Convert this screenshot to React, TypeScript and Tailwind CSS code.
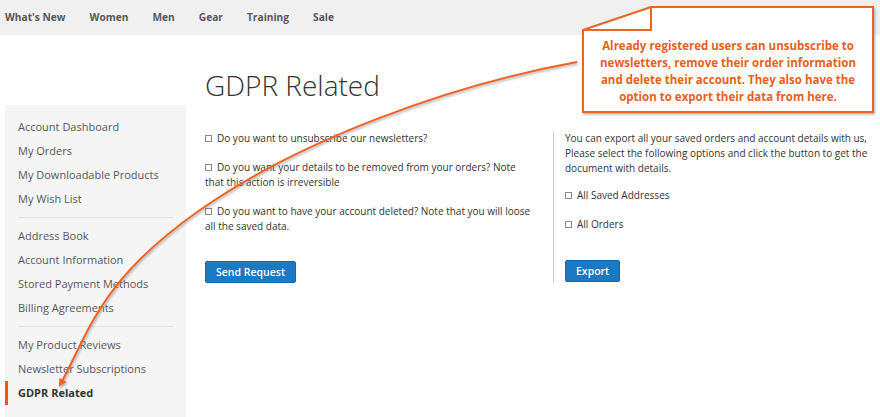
import React from "react";

const navItems = ["What's New", "Women", "Men", "Gear", "Training", "Sale"];

const groups = [
  ["Account Dashboard", "My Orders", "My Downloadable Products", "My Wish List"],
  ["Address Book", "Account Information", "Stored Payment Methods", "Billing Agreements"],
  ["My Product Reviews", "Newsletter Subscriptions", "GDPR Related"],
];

function Box() {
  return <span className="inline-block w-[7px] h-[7px] border border-[#8a8a8a] mr-[5px] align-[0px] bg-white" />;
}

export default function App() {
  return (
    <div
      className="relative w-[880px] h-[417px] overflow-hidden bg-white text-[#333]"
      style={{ fontFamily: '"Open Sans", "Noto Sans", sans-serif' }}
    >
      {/* top nav */}
      <div className="h-[35px] bg-[#f0f0f0] flex items-center pl-[5px] gap-[24px] text-[10.2px] font-bold text-[#575757]">
        {navItems.map((n) => (
          <span key={n}>{n}</span>
        ))}
      </div>

      <div className="flex">
        {/* sidebar */}
        <div className="ml-[5px] w-[181px] mt-[70px] bg-[#f5f5f5] pt-[10px] pb-[20px] h-[330px]">
          {groups.map((g, gi) => (
            <div key={gi}>
              {gi > 0 && <div className="mx-[13px] my-[6px] h-px bg-[#e3e3e3]" />}
              {g.map((item) => {
                const active = item === "GDPR Related";
                return active ? (
                  <div
                    key={item}
                    className="h-[24px] flex items-center border-l-[3px] border-[#ff5501] pl-[10px] text-[11px] font-bold text-[#333]"
                  >
                    {item}
                  </div>
                ) : (
                  <div key={item} className="h-[24px] flex items-center pl-[13px] text-[11px] text-[#575757]">
                    {item}
                  </div>
                );
              })}
            </div>
          ))}
        </div>

        {/* main */}
        <div className="ml-[19px] flex-1">
          <h1 className="mt-[33px] h-[35px] text-[28px] leading-[35px] font-light text-[#333]">GDPR Related</h1>
          <div className="mt-[28px] flex text-[10px] leading-[15px] text-[#333]">
            <div className="w-[348px] pr-[18px]">
              <div className="mb-[14px]">
                <Box />
                Do you want to unsubscribe our newsletters?
              </div>
              <div className="mb-[14px]">
                <Box />
                Do you want your details to be removed from your orders? Note that this action is irreversible
              </div>
              <div>
                <Box />
                Do you want to have your account deleted? Note that you will loose all the saved data.
              </div>
              <button className="mt-[27px] h-[22px] px-[10px] bg-[#1979c3] border border-[#1369ad] rounded-[2px] text-white font-semibold text-[10.5px]">
                Send Request
              </button>
            </div>
            <div className="border-l border-[#cfcfcf] pl-[11px] w-[322px]">
              <div>
                You can export all your saved orders and account details with us, Please select the following options and click the button to get the document with details.
              </div>
              <div className="mt-[12px]">
                <Box />
                All Saved Addresses
              </div>
              <div className="mt-[14px]">
                <Box />
                All Orders
              </div>
              <button className="mt-[28px] h-[22px] px-[10px] bg-[#1979c3] border border-[#1369ad] rounded-[2px] text-white font-semibold text-[10.5px]">
                Export
              </button>
            </div>
          </div>
        </div>
      </div>

      {/* annotation overlay */}
      <svg className="absolute inset-0 pointer-events-none" width="880" height="417" viewBox="0 0 880 417">
        <defs>
          <marker id="ah" markerWidth="8" markerHeight="8" refX="6" refY="4" orient="auto" markerUnits="userSpaceOnUse">
            <path d="M0,0 L8,4 L0,8 Z" fill="#ef6420" />
          </marker>
          <filter id="sh" x="-10%" y="-10%" width="120%" height="120%">
            <feDropShadow dx="1" dy="1.5" stdDeviation="0.8" floodColor="#777" floodOpacity="0.6" />
          </filter>
        </defs>
        <path
          d="M577,62 C450,85 300,140 200,210 S90,330 60,385"
          fill="none"
          stroke="#ef6420"
          strokeWidth="2"
          filter="url(#sh)"
          markerEnd="url(#ah)"
        />
        <g filter="url(#sh)">
          <path d="M583,30 L651,7 L873,7 L873,112 L583,112 Z" fill="white" stroke="#ef6420" strokeWidth="2" />
          <path d="M651,7 L651,30 L583,30" fill="none" stroke="#ef6420" strokeWidth="2" />
        </g>
      </svg>
      <div className="absolute left-[583px] top-[37px] w-[290px] text-center text-[11.5px] leading-[17px] font-bold text-[#e8601c]">
        Already registered users can unsubscribe to
        <br />
        newsletters, remove their order information
        <br />
        and delete their account. They also have the
        <br />
        option to export their data from here.
      </div>
    </div>
  );
}
